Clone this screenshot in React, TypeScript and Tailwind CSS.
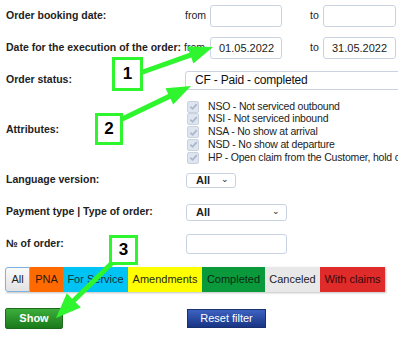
import React from 'react';

const F = { fontFamily: '"Liberation Sans", Arial, sans-serif' };

type Pt = [number, number];

// arrow polygon from a start point to the tip
function arrowPoints(s: Pt, t: Pt, w: number, L: number, H: number) {
  const dx = t[0] - s[0];
  const dy = t[1] - s[1];
  const len = Math.hypot(dx, dy);
  const ux = dx / len;
  const uy = dy / len;
  const nx = -uy;
  const ny = ux;
  const bx = t[0] - ux * L;
  const by = t[1] - uy * L;
  const pts: Pt[] = [
    [s[0] + (nx * w) / 2, s[1] + (ny * w) / 2],
    [bx + (nx * w) / 2, by + (ny * w) / 2],
    [bx + nx * H, by + ny * H],
    [t[0], t[1]],
    [bx - nx * H, by - ny * H],
    [bx - (nx * w) / 2, by - (ny * w) / 2],
    [s[0] - (nx * w) / 2, s[1] - (ny * w) / 2],
  ];
  return pts.map((p) => p.join(',')).join(' ');
}

function Label({ children }: { children: React.ReactNode }) {
  return (
    <div className="w-[185px] shrink-0 whitespace-nowrap pl-[6px] text-[10.5px] font-bold text-[#222]">
      {children}
    </div>
  );
}

function Check() {
  return (
    <span className="flex h-[12px] w-[12px] shrink-0 items-center justify-center rounded-[2px] border border-[#c9d2df] bg-[#dfe5ee]">
      <svg width="9" height="9" viewBox="0 0 10 10">
        <path d="M1.5 5.2 L4 7.6 L8.6 2.4" fill="none" stroke="#a7b6cc" strokeWidth="1.8" />
      </svg>
    </span>
  );
}

const attrs = [
  'NSO - Not serviced outbound',
  'NSI - Not serviced inbound',
  'NSA - No show at arrival',
  'NSD - No show at departure',
  'HP - Open claim from the Customer, hold order',
];

const tabs = [
  { t: 'All', c: 'w-[25px] rounded-l-[3px] border border-[#7fb3dd] bg-gradient-to-b from-[#fafafa] to-[#e2e2e2] text-[#222]' },
  { t: 'PNA', c: 'w-[33px] bg-[#ff6a00] text-[#2a1a10]' },
  { t: 'For Service', c: 'w-[65px] bg-[#00c3f5] text-[#15303a]' },
  { t: 'Amendments', c: 'w-[74px] bg-[#ffff00] text-[#2a2a10]' },
  { t: 'Completed', c: 'w-[63px] bg-[#0a9a3c] text-[#0a2a12]' },
  { t: 'Canceled', c: 'w-[55px] bg-[#e8e8e8] text-[#222]' },
  { t: 'With claims', c: 'w-[65px] bg-[#e02b2b] text-[#3a0808]' },
];

function Box({ n, className }: { n: string; className: string }) {
  return (
    <div
      className={`absolute flex items-center justify-center border-[3px] border-[#2ef52e] bg-white text-[17px] font-bold text-black ${className}`}
    >
      {n}
    </div>
  );
}

export default function App() {
  const green = '#2ef52e';
  return (
    <div className="relative h-[341px] w-[398px] overflow-hidden bg-white text-[#222]" style={F}>
      {/* form rows */}
      <div className="flex flex-col">
        <div className="flex h-[32px] items-center">
          <Label>Order booking date:</Label>
          <span className="w-[25px] text-[10.5px]">from</span>
          <div className="h-[22px] w-[72px] shrink-0 rounded-[3px] border border-[#c9d3e2] bg-white" />
          <span className="ml-[28px] w-[13px] text-[10.5px]">to</span>
          <div className="h-[22px] w-[73px] shrink-0 rounded-[3px] border border-[#c9d3e2] bg-white" />
        </div>
        <div className="flex h-[32px] items-center">
          <Label>Date for the execution of the order:</Label>
          <span className="-ml-[1px] w-[26px] text-[10.5px]">from</span>
          <div className="flex h-[22px] w-[72px] shrink-0 items-center rounded-[3px] border border-[#c9d3e2] bg-white pl-[8px] text-[11px]">
            01.05.2022
          </div>
          <span className="ml-[28px] w-[13px] text-[10.5px]">to</span>
          <div className="flex h-[22px] w-[73px] shrink-0 items-center rounded-[3px] border border-[#c9d3e2] bg-white pl-[8px] text-[11px]">
            31.05.2022
          </div>
        </div>
        <div className="flex h-[32px] items-center">
          <Label>Order status:</Label>
          <div className="flex h-[19px] w-[240px] shrink-0 items-center rounded-[3px] border border-[#c9d3e2] bg-white pl-[9px] text-[12px] tracking-[-0.2px] text-[#111]">
            CF - Paid - completed
          </div>
        </div>
        <div className="flex h-[68px] items-center">
          <Label>Attributes:</Label>
          <div className="ml-[2px] flex flex-col pt-[4px]">
            {attrs.map((a) => (
              <div key={a} className="flex h-[12.75px] items-center gap-[9px] whitespace-nowrap">
                <Check />
                <span className="text-[10.5px] tracking-[-0.2px] text-[#222]">{a}</span>
              </div>
            ))}
          </div>
        </div>
        <div className="flex h-[32px] items-center">
          <Label>Language version:</Label>
          <div className="ml-[1px] flex h-[15px] w-[50px] items-center justify-between rounded-[3px] border border-[#c9d3e2] bg-white pl-[9px] pr-[6px] text-[11px] font-bold">
            All
            <span className="text-[9px] font-normal">⌄</span>
          </div>
        </div>
        <div className="flex h-[32px] items-center">
          <Label>Payment type | Type of order:</Label>
          <div className="ml-[1px] flex h-[17px] w-[101px] items-center justify-between rounded-[3px] border border-[#c9d3e2] bg-white pl-[9px] pr-[6px] text-[11px] font-bold">
            All
            <span className="text-[9px] font-normal">⌄</span>
          </div>
        </div>
        <div className="flex h-[32px] items-center">
          <Label>№ of order:</Label>
          <div className="ml-[1px] h-[20px] w-[101px] rounded-[3px] border border-[#c9d3e2] bg-white" />
        </div>
      </div>

      {/* status tabs */}
      <div className="ml-[5px] mt-[7px] flex h-[25px] w-fit shadow-[1px_1px_2px_rgba(0,0,0,0.25)]">
        {tabs.map((t) => (
          <div key={t.t} className={`flex items-center justify-center whitespace-nowrap text-[11px] ${t.c}`}>
            {t.t}
          </div>
        ))}
      </div>

      {/* buttons */}
      <div className="mt-[16px] flex items-center">
        <button className="ml-[5px] h-[21px] w-[58px] rounded-[2px] border border-[#1c6b1c] bg-gradient-to-b from-[#3cae3c] to-[#1a7a1a] text-[11px] font-bold text-white">
          Show
        </button>
        <button className="ml-[124px] h-[19px] w-[79px] border border-[#1a2f70] bg-gradient-to-b from-[#3d62c0] to-[#183585] text-[11px] text-white">
          Reset filter
        </button>
      </div>

      {/* annotation overlay */}
      <svg className="pointer-events-none absolute left-0 top-0" width="398" height="341">
        <polygon points={arrowPoints([140, 73], [213, 47], 5, 24, 9)} fill={green} />
        <polygon points={arrowPoints([118, 121], [191, 86], 5, 24, 9)} fill={green} />
        <polygon points={arrowPoints([114, 261], [56, 318], 5, 25, 10)} fill={green} />
      </svg>
      <Box n="1" className="left-[112px] top-[57px] h-[34px] w-[31px]" />
      <Box n="2" className="left-[95px] top-[113px] h-[32px] w-[28px]" />
      <Box n="3" className="left-[109px] top-[235px] h-[30px] w-[29px]" />
    </div>
  );
}
